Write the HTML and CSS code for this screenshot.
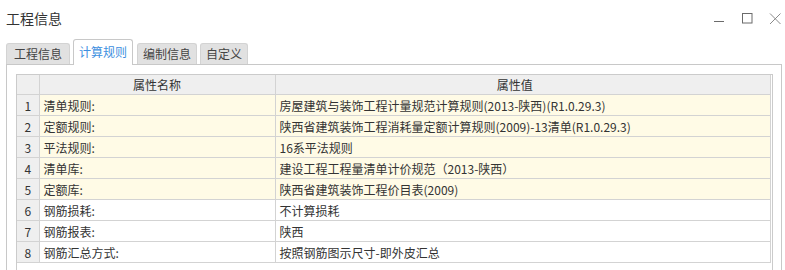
FILE: index.html
```html
<!DOCTYPE html>
<html lang="zh">
<head>
<meta charset="utf-8">
<link rel="stylesheet" href="styles.css">
</head>
<body>
<div class="window">
  <div class="titlebar">
    <span class="title">工程信息</span>
    <div class="controls">
      <svg class="ctl" width="12" height="12" viewBox="0 0 12 12"><line x1="1" y1="8.5" x2="11" y2="8.5" stroke="#6b6b6b" stroke-width="1"/></svg>
      <svg class="ctl" width="12" height="12" viewBox="0 0 12 12"><rect x="1.5" y="0.5" width="9.5" height="9.5" fill="none" stroke="#6b6b6b" stroke-width="1"/></svg>
      <svg class="ctl" width="12" height="12" viewBox="0 0 12 12"><path d="M1 0.5 L11.5 11 M11.5 0.5 L1 11" stroke="#8a8a8a" stroke-width="1" fill="none"/></svg>
    </div>
  </div>
  <div class="tabs">
    <div class="tab first">工程信息</div>
    <div class="tab active">计算规则</div>
    <div class="tab">编制信息</div>
    <div class="tab">自定义</div>
  </div>
  <div class="panel">
    <div class="grid">
      <table>
        <colgroup><col class="c-num"><col class="c-name"><col></colgroup>
        <thead>
          <tr><th class="num"></th><th>属性名称</th><th class="valh">属性值</th></tr>
        </thead>
        <tbody>
          <tr class="hl"><td class="num">1</td><td>清单规则:</td><td>房屋建筑与装饰工程计量规范计算规则(2013-陕西)(R1.0.29.3)</td></tr>
          <tr class="hl"><td class="num">2</td><td>定额规则:</td><td>陕西省建筑装饰工程消耗量定额计算规则(2009)-13清单(R1.0.29.3)</td></tr>
          <tr class="hl"><td class="num">3</td><td>平法规则:</td><td>16系平法规则</td></tr>
          <tr class="hl"><td class="num">4</td><td>清单库:</td><td>建设工程工程量清单计价规范（2013-陕西）</td></tr>
          <tr class="hl"><td class="num">5</td><td>定额库:</td><td>陕西省建筑装饰工程价目表(2009)</td></tr>
          <tr><td class="num">6</td><td>钢筋损耗:</td><td>不计算损耗</td></tr>
          <tr><td class="num">7</td><td>钢筋报表:</td><td>陕西</td></tr>
          <tr><td class="num">8</td><td>钢筋汇总方式:</td><td>按照钢筋图示尺寸-即外皮汇总</td></tr>
        </tbody>
      </table>
    </div>
  </div>
</div>
</body>
</html>
```
FILE: styles.css
```css
html, body {
  margin: 0;
  padding: 0;
  background: #ffffff;
}
body {
  font-family: "Noto Sans CJK SC", "Microsoft YaHei", sans-serif;
  color: #333333;
  width: 785px;
  height: 270px;
  overflow: hidden;
}
.titlebar {
  height: 39px;
  display: flex;
  align-items: center;
  padding: 0 4px 3px 6px;
  box-sizing: border-box;
}
.title {
  font-size: 14px;
  color: #333;
}
.controls {
  margin-left: auto;
  display: flex;
  gap: 16px;
  align-items: center;
  padding-top: 2px;
}
.ctl { display: block; }
.tabs {
  display: flex;
  align-items: flex-end;
  padding-left: 6px;
  height: 25px;
}
.tab {
  font-size: 12px;
  height: 20px;
  line-height: 20px;
  padding: 0 5px;
  background: #e1e1e1;
  border: 1px solid #d3d3d3;
  border-bottom: none;
  border-radius: 3px 3px 0 0;
  margin-right: 3px;
  color: #444;
}
.tab.first { padding: 0 7px 0 7px; }
.tab.active {
  background: #ffffff;
  color: #3d8fe0;
  height: 25px;
  line-height: 24px;
  border-color: #c8c8c8;
  position: relative;
  z-index: 1;
  margin-bottom: -1px;
  margin-right: 4px;
}
.panel {
  border: 1px solid #c8c8c8;
  border-bottom: none;
  margin: 0 3px 0 6px;
  padding: 9px 8px 0 9px;
  height: 196px;
}
.grid {
  border: 1px solid #cbcbcb;
  border-bottom: none;
  height: 196px;
  width: 757px;
  box-sizing: border-box;
}
table {
  border-collapse: collapse;
  width: 754px;
  table-layout: fixed;
  font-size: 12px;
}
col.c-num { width: 22px; }
col.c-name { width: 236px; }
th, td {
  border-right: 1px solid #d3d3d3;
  border-bottom: 1px solid #d3d3d3;
  padding: 0 4px;
  white-space: nowrap;
  overflow: hidden;
  text-align: left;
}
th {
  background: #efefef;
  font-weight: normal;
  height: 19px;
  text-align: center;
  color: #333;
}
th.valh { padding-right: 20px; }
td { height: 20px; }
tr.hl td { background: #fffbe6; }
td.num, th.num {
  background: #efefef !important;
  text-align: center;
  padding: 0;
}
```
